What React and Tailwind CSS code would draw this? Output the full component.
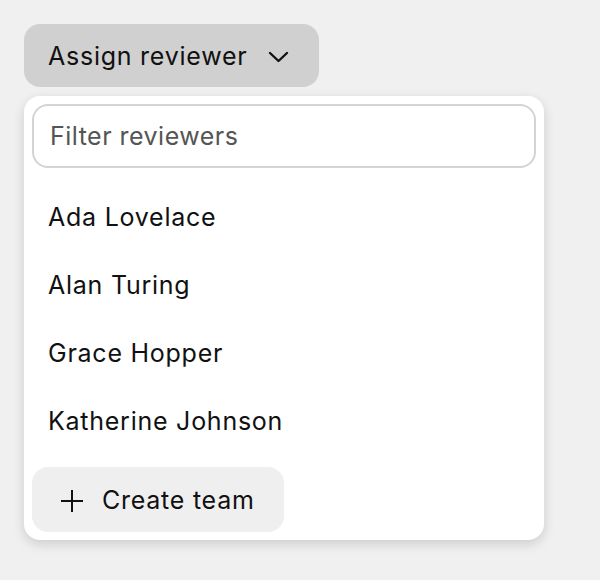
import React from "react";

export default function App() {
  const people = ["Ada Lovelace", "Alan Turing", "Grace Hopper", "Katherine Johnson"];
  return (
    <div className="min-h-[580px] w-[600px] bg-[#f0f0f0] p-6 tracking-[0.03em]" style={{ fontFamily: "Inter, 'Noto Sans', sans-serif" }}>
      <button className="flex h-[63px] w-[295px] items-center rounded-2xl bg-[#d0d0d0] pl-6 pt-[2px] text-[25px] tracking-[0.03em] text-[#111]">
        <span>Assign reviewer</span>
        <svg className="ml-[21px]" width="21" height="12" viewBox="0 0 21 12" fill="none" stroke="#111" strokeWidth="2.4" strokeLinecap="round" strokeLinejoin="round">
          <path d="M2 2l8.5 8 8.5-8" />
        </svg>
      </button>
      <div className="mt-[9px] flex w-[520px] flex-col rounded-2xl bg-white p-2 shadow-[0_4px_12px_rgba(0,0,0,0.15)]">
        <div className="flex h-[64px] items-center rounded-2xl border-2 border-[#d4d4d4] pl-4 pt-[2px] text-[25px] text-[#555]">
          Filter reviewers
        </div>
        <div className="mt-4 flex flex-col">
          {people.map((p) => (
            <div key={p} className="flex h-[68px] items-center pl-4 text-[25px] tracking-[0.03em] text-[#111]">
              {p}
            </div>
          ))}
        </div>
        <button className="mt-[11px] flex h-[65px] w-[252px] items-center rounded-2xl bg-[#efefef] pl-[28px] pt-[2px] text-[25px] tracking-[0.03em] text-[#111]">
          <svg width="24" height="24" viewBox="0 0 24 24" fill="none" stroke="#111" strokeWidth="2">
            <path d="M12 1v22M1 12h22" />
          </svg>
          <span className="ml-[18px]">Create team</span>
        </button>
      </div>
    </div>
  );
}
